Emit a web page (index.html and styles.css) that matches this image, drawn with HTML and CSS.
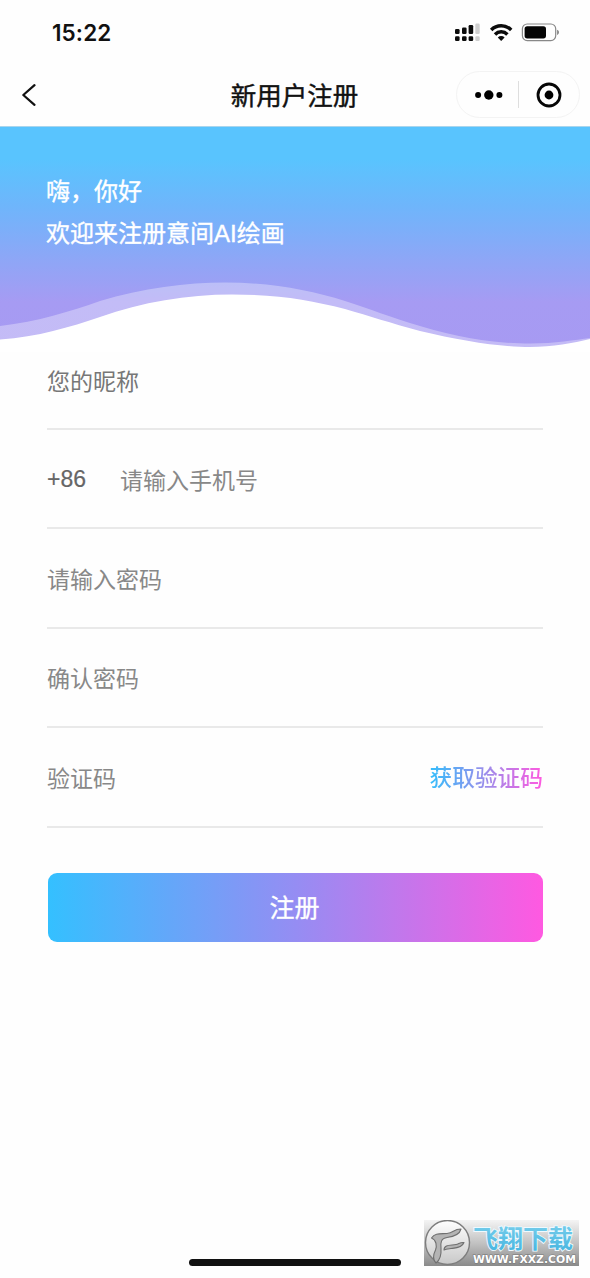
FILE: index.html
```html
<!DOCTYPE html>
<html lang="zh-CN">
<head>
<meta charset="utf-8">
<title>新用户注册</title>
<link rel="stylesheet" href="styles.css">
</head>
<body>
<div class="screen">
  <header class="statusbar">
    <span class="clock">15:22</span>
    <svg class="status-icons" width="106" height="22" viewBox="454 22 106 22">
      <g fill="#0b0b0b">
        <rect x="455" y="29" width="4.6" height="5" rx="1.3"/><rect x="462" y="27.5" width="4.6" height="6.5" rx="1.3"/><rect x="468.6" y="25" width="4.6" height="9" rx="1.3"/>
        <rect x="455" y="36.3" width="4.6" height="4.8" rx="1.3"/><rect x="462" y="36.3" width="4.6" height="4.8" rx="1.3"/><rect x="468.6" y="36.3" width="4.6" height="4.8" rx="1.3"/>
      </g>
      <g fill="#cfcfcf"><rect x="475.3" y="23.5" width="4.4" height="10.5" rx="1.3"/><rect x="475.3" y="36.3" width="4.4" height="4.8" rx="1.3"/></g>
      <g fill="none" stroke="#0b0b0b" stroke-width="3.5"><path d="M491.2 29.900a14.2 14.2 0 0 1 20 0"/><path d="M495 34.4a8.8 8.8 0 0 1 12.4 0"/></g>
      <path d="M497.8 37.4a4.8 4.8 0 0 1 6.8 0L501.2 40.9z" fill="#0b0b0b"/>
      <rect x="522.4" y="24" width="33.3" height="16.6" rx="4.8" fill="none" stroke="#888" stroke-width="1.2"/>
      <rect x="524.6" y="26.2" width="21.4" height="12.2" rx="2.6" fill="#050505"/>
      <path d="M557.2 29.8c2.2 1 2.2 4.2 0 5.2z" fill="#777"/>
    </svg>
  </header>
  <nav class="navbar">
    <svg class="back" width="16" height="24" viewBox="0 0 16 24"><path d="M14.500 2.2 3.300 12l11.200 9.8" fill="none" stroke="#111" stroke-width="2.2" stroke-linecap="round" stroke-linejoin="round"/></svg>
    <h1 class="title">新用户注册</h1>
    <div class="capsule">
      <svg width="28" height="12" viewBox="0 0 28 12"><circle cx="3.1" cy="6" r="3"/><circle cx="13.8" cy="6" r="4.7"/><circle cx="24.4" cy="6" r="3"/></svg>
      <i class="divider"></i>
      <svg width="26" height="26" viewBox="0 0 26 26"><circle cx="13" cy="13" r="11" fill="none" stroke="#060606" stroke-width="2.8"/><circle cx="13" cy="13" r="4.4"/></svg>
    </div>
  </nav>
  <section class="hero">
    <p>嗨，你好</p>
    <p>欢迎来注册意间AI绘画</p>
    <svg class="wave" width="590" height="72" viewBox="0 280 590 72">
      <path fill="#fff" fill-opacity=".33" d="M0 326C38 321.500 70 311.500 100 301C142 288 187 282.500 225 282.500C270 282.500 310 290 345 301C370 309 390 317 420 326C470 341 505 343.500 530 343.500C555 343.500 575 340 590 338V352H0Z"/>
      <path fill="#fff" d="M0 339.500C38 337 70 327 100 317C142 302 187 294.500 232 294.500C278 294.500 310 300 345 309C370 316 390 323 420 331C462 341 500 347 530 347C553 347 573 343 590 339V352H0Z"/>
    </svg>
  </section>
  <main class="form">
    <div class="row nickname">您的昵称</div>
    <div class="row"><span class="prefix">+86</span><span>请输入手机号</span></div>
    <div class="row">请输入密码</div>
    <div class="row">确认密码</div>
    <div class="row">验证码<a class="code">获取验证码</a></div>
    <button class="submit">注册</button>
  </main>
  <i class="home"></i>
  <svg class="watermark" width="155" height="46" viewBox="0 0 155 46">
    <defs>
      <linearGradient id="plate" x2="0" y2="1"><stop stop-color="#f4f4f4"/><stop offset=".5" stop-color="#c2c2c2"/><stop offset="1" stop-color="#8a8a8a"/></linearGradient>
      <linearGradient id="disc" x2="0" y2="1"><stop stop-color="#fff"/><stop offset="1" stop-color="#c8c8c8"/></linearGradient>
      <linearGradient id="sky" x2="0" y2="1"><stop stop-color="#80d2ed"/><stop offset="1" stop-color="#43b3df"/></linearGradient>
    </defs>
    <rect width="155" height="46" fill="url(#plate)"/>
    <circle cx="23.500" cy="22.500" r="22" fill="url(#disc)" stroke="#7d7d7d" stroke-width="1.400"/>
    <g fill="#b4b4b4" stroke="#707070" stroke-width="1.100" stroke-linejoin="round">
      <path d="M7.500 18C11 12.500 17 14 23 13.500C30 13 29 9 37 9C36 13 31 16.500 23 17.500C17 18.500 16.500 22 17 28C17.500 35 16 40 12 43C9 40 9 35 11.500 30C13 26 12.500 20 7.500 18Z"/>
      <path d="M20 30C20 24 27 25.500 32 24.500C35 24 36 22 40 22.500C38 28 31 28 27 28.500C23 29 22 29 20 30Z"/>
    </g>
    <text class="wm-name" x="49" y="27.500" textLength="100" lengthAdjust="spacingAndGlyphs">飞翔下载</text>
    <text class="wm-url" x="49" y="42.500" textLength="103" lengthAdjust="spacingAndGlyphs">WWW.FXXZ.COM</text>
  </svg>
</div>
</body>
</html>
```
FILE: styles.css
```css
* { box-sizing: border-box; }
body { margin: 0; background: #fefefe; font-family: "Liberation Sans", "Noto Sans CJK SC", sans-serif; }
.screen { position: relative; width: 590px; height: 1278px; overflow: hidden; display: flex; flex-direction: column; background: #fefefe; }
.statusbar { height: 64px; padding: 0 30px 0 52px; display: flex; justify-content: space-between; align-items: center; }
.clock { margin-top: 2px; font: 600 22.5px/30px Inter, sans-serif; color: #111; letter-spacing: .1px; }
.status-icons { margin-top: 2px; }
.navbar { height: 63px; padding: 0 10px 0 20px; display: grid; grid-template-columns: 124px 1fr 124px; align-items: center; border-bottom: 1px solid #a9d5ed; }
.back { margin-top: -1px; }
.title { margin: -3px 0 0 -11px; text-align: center; font: 400 25.500px/36px "Noto Sans CJK SC", sans-serif; color: #111; -webkit-text-stroke: .45px #111; }
.capsule { height: 47px; width: 124px; margin-top: -1px; border: 1px solid #f3f3f3; border-radius: 24px; display: flex; align-items: center; padding: 0 17px 0 18px; justify-content: space-between; }
.divider { width: 1px; height: 27px; background: #dedede; margin-right: 2px; }
.hero { height: 225px; position: relative; padding: 44px 46px 0; background: linear-gradient(#59c4fe 0, #59c4fe 32px, #6fb5fb 80px, #8aa8f7 126px, #a69bf3 175px, #a79af2 225px); color: #fff; }
.hero p { margin: 0; font-size: 24px; line-height: 41.500px; -webkit-text-stroke: .35px #fff; }
.wave { position: absolute; left: 0; bottom: 0; display: block; }
.form { padding: 0 47px; display: flex; flex-direction: column; }
.row { height: 99.400px; border-bottom: 2px solid #e9e9e9; display: flex; align-items: center; font-size: 23px; color: #888; }
.nickname { height: 78px; padding-bottom: 20px; color: #777; }
.prefix { width: 73px; padding-top: 2px; color: #666; -webkit-text-stroke: .2px #666; }
.code { margin-left: auto; font-size: 22.700px; font-weight: 500; background: linear-gradient(90deg, #35bdfb, #a18aea 52%, #ff5ae0); background-clip: text; -webkit-background-clip: text; color: transparent; }
.submit { height: 69px; margin: 45px 0 0 1px; padding: 0 2px 3px 0; border: 0; border-radius: 9px; background: linear-gradient(90deg, #34c0ff, #958df3 50%, #ff59e1); color: #fff; font: 400 25px/36px "Noto Sans CJK SC", sans-serif; -webkit-text-stroke: .35px #fff; }
.home { position: absolute; left: 189px; top: 1259px; width: 212px; height: 7px; border-radius: 4px; background: #111; }
.watermark { position: absolute; left: 424px; top: 1220px; }
.wm-name { font: 700 25px "Noto Sans CJK SC", sans-serif; fill: url(#sky); stroke: #effaff; stroke-width: 1.800px; paint-order: stroke; }
.wm-url { font: 700 10.500px "DejaVu Sans", sans-serif; fill: #fff; stroke: #777; stroke-width: 1px; paint-order: stroke; }
```
